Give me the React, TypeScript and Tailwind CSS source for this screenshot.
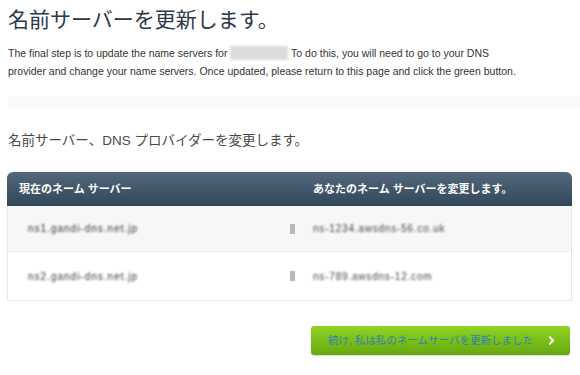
import { ChevronRight } from 'lucide-react';

const servers = [
  { current: 'ns1.gandi-dns.net.jp', next: 'ns-1234.awsdns-56.co.uk' },
  { current: 'ns2.gandi-dns.net.jp', next: 'ns-789.awsdns-12.com' },
];

export default function App() {
  return (
    <div className="w-[580px] h-[375px] overflow-hidden bg-white font-['Liberation_Sans','Noto_Sans_CJK_JP',sans-serif]">
      {/* Intro */}
      <div className="px-2 pt-[6px]">
        <h1 className="text-[21px] leading-[28px] text-[#2a3a48]">名前サーバーを更新します。</h1>
        <p className="mt-[10px] whitespace-nowrap text-[10.5px] leading-[18px] text-[#333]">
          The final step is to update the name servers for{' '}
          <span className="inline-block w-[58px] h-[14px] align-[-3px] bg-[#dcdcdc] blur-[1px]" />{' '}
          To do this, you will need to go to your DNS
          <br />
          provider and change your name servers. Once updated, please return to this page and click
          the green button.
        </p>
      </div>

      <div className="ml-2 mt-[16px] h-[12px] bg-[#fafafa]" />

      {/* Name servers */}
      <div className="px-2 pt-[22px]">
        <h2 className="text-[13.5px] leading-[22px] text-[#4a4a4a]">
          名前サーバー、DNS プロバイダーを変更します。
        </h2>

        <div className="mt-[20px] w-[565px] -ml-px">
          <div className="flex h-[34px] items-center rounded-t-[6px] bg-gradient-to-b from-[#52687a] to-[#32475a] text-[11px] font-bold text-white">
            <div className="w-[294px] pl-3">現在のネーム サーバー</div>
            <div className="flex-1 pl-[12px]">あなたのネーム サーバーを変更します。</div>
          </div>
          <div className="border-x border-b border-[#e6e6e6]">
            {servers.map((s, i) => (
              <div
                key={s.current}
                className={
                  i === 0
                    ? 'flex h-[46px] items-center bg-[#f7f7f7] border-b border-[#ececec] text-[10px]'
                    : 'flex h-[48px] items-center bg-white text-[10px]'
                }
              >
                <div className="w-[282px] pl-[20px]">
                  <span className="text-[#333] blur-[0.9px] tracking-[1px]">{s.current}</span>
                </div>
                <div className="flex items-center">
                  <span className="w-[5px] h-[10px] bg-[#b8b8b8] blur-[0.5px]" />
                  <span className="ml-[18px] text-[#444] blur-[0.9px] tracking-[0.8px]">{s.next}</span>
                </div>
              </div>
            ))}
          </div>
        </div>

        <div className="mt-[25px] flex justify-end pr-[2px]">
          <button className="flex h-[29px] w-[259px] items-center justify-between rounded-[3px] bg-gradient-to-b from-[#92d324] to-[#66a90e] pl-[17px] pr-[12px] text-[10.5px] whitespace-nowrap text-[#2b86b0] shadow-[0_1px_1px_rgba(0,0,0,0.15)]">
            <span>続け, 私は私のネームサーバを更新しました</span>
            <ChevronRight className="h-[13px] w-[13px] text-white" strokeWidth={3.5} />
          </button>
        </div>
      </div>
    </div>
  );
}
